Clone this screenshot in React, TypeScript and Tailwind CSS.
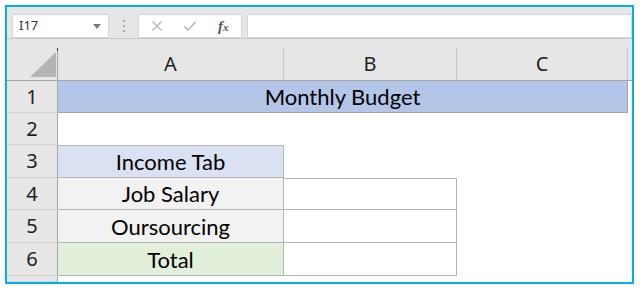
import React from "react";

const cellFont = { fontFamily: "Lato, 'Liberation Sans', sans-serif" };
const uiFont = { fontFamily: "'Noto Sans', 'Open Sans', sans-serif" };

function RowHead({ n }: { n?: string }) {
  return (
    <div
      className="flex items-center justify-center bg-[#e6e6e6] border-r border-r-[#a6a6a6] border-b border-b-[#d2d2d2] text-[20px] text-[#222]"
      style={uiFont}
    >
      {n}
    </div>
  );
}

function Cell({
  text,
  className = "",
}: {
  text?: string;
  className?: string;
}) {
  return (
    <div
      className={`flex items-center justify-center text-[22px] text-black ${className}`}
      style={cellFont}
    >
      {text}
    </div>
  );
}

export default function App() {
  const cols = "grid grid-cols-[51px_226px_173px_171px_1fr]";
  return (
    <div className="w-[640px] h-[290px] bg-white pt-[5px] pl-[5px]">
      <div className="w-[629px] h-[279px] border-2 border-[#00b0f0] bg-[#e6e6e6] flex flex-col overflow-hidden">
        {/* formula toolbar */}
        <div className="h-[32px] shrink-0 flex items-start pt-[7px] pl-[5px] border-b border-[#c8c8c8]">
          <div
            className="w-[97px] h-[24px] bg-white border border-[#d6d6d6] flex items-center justify-between pl-[6px] pr-[7px] text-[13px] text-[#333]"
            style={uiFont}
          >
            <span>I17</span>
            <svg width="8" height="5" viewBox="0 0 8 5">
              <path d="M0 0h8L4 5z" fill="#777" />
            </svg>
          </div>
          <div className="w-[29px] h-[24px] flex flex-col items-center justify-center gap-[3px]">
            <span className="w-[2px] h-[2px] bg-[#a8a8a8]" />
            <span className="w-[2px] h-[2px] bg-[#a8a8a8]" />
            <span className="w-[2px] h-[2px] bg-[#a8a8a8]" />
          </div>
          <div className="w-[104px] h-[24px] bg-white border border-[#d6d6d6] flex items-center">
            <svg width="12" height="12" viewBox="0 0 12 12" className="ml-[12px]">
              <path d="M1.5 1.5l9 9M10.5 1.5l-9 9" stroke="#b8b8b8" strokeWidth="1.5" />
            </svg>
            <svg width="14" height="12" viewBox="0 0 14 12" className="ml-[20px]">
              <path d="M1.5 6.5l3.5 3.5 7.5-8" stroke="#bcbcbc" strokeWidth="1.8" fill="none" />
            </svg>
            <span
              className="ml-[21px] italic font-bold text-[15px] text-[#555] leading-none"
              style={{ fontFamily: "'Liberation Serif', serif" }}
            >
              f<span className="text-[11px]">x</span>
            </span>
          </div>
          <div className="ml-[5px] flex-1 h-[24px] bg-white border border-[#d6d6d6]" />
        </div>

        {/* column headers */}
        <div className={`${cols} h-[42px] shrink-0 border-b border-[#a6a6a6]`}>
          <div className="relative border-r border-[#a6a6a6] mt-[9px]">
            <svg width="26" height="25" viewBox="0 0 26 25" className="absolute left-[23px] top-[4px]">
              <path d="M26 0V25H0z" fill="#b4b4b4" />
            </svg>
            <span className="absolute right-[-1px] top-0 w-[1px] h-[3px] bg-[#333]" />
          </div>
          {["A", "B", "C"].map((c) => (
            <div
              key={c}
              className="mt-[9px] flex items-center justify-center border-r border-[#c6c6c6] text-[20px] text-[#222]"
              style={uiFont}
            >
              {c}
            </div>
          ))}
          <div className="mt-[9px]" />
        </div>

        {/* sheet body */}
        <div className={`${cols} grid-rows-[32px_32px_33px_32px_33px_33px_1fr] flex-1 bg-white`}>
          <RowHead n="1" />
          <Cell
            text="Monthly Budget"
            className="col-span-3 bg-[#b4c6e7] border-b border-r border-[#a6a6a6]"
          />
          <div />

          <RowHead n="2" />
          <div />
          <div />
          <div />
          <div />

          <RowHead n="3" />
          <Cell
            text="Income Tab"
            className="bg-[#d9e1f2] border-t border-b border-r border-[#b4b4b4]"
          />
          <div />
          <div />
          <div />

          <RowHead n="4" />
          <Cell text="Job Salary" className="bg-[#f2f2f2] border-b border-r border-[#b4b4b4]" />
          <div className="border-t border-b border-r border-[#b4b4b4]" />
          <div />
          <div />

          <RowHead n="5" />
          <Cell text="Oursourcing" className="bg-[#f2f2f2] border-b border-r border-[#b4b4b4]" />
          <div className="border-b border-r border-[#b4b4b4]" />
          <div />
          <div />

          <RowHead n="6" />
          <Cell text="Total" className="bg-[#e2efda] border-b border-r border-[#b4b4b4]" />
          <div className="border-b border-r border-[#b4b4b4]" />
          <div />
          <div />

          <RowHead />
          <div />
          <div />
          <div />
          <div />
        </div>
      </div>
    </div>
  );
}
